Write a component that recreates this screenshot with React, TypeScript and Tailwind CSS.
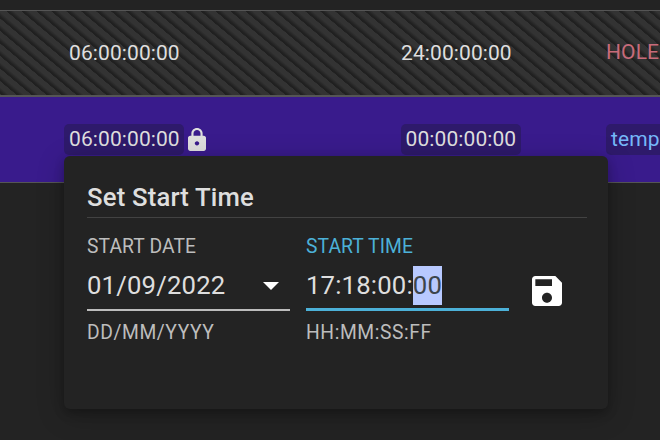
import React from "react";

function TimeChip({ children, className = "" }: { children: React.ReactNode; className?: string }) {
  return (
    <span className={`flex h-[31px] shrink-0 items-center rounded-[5px] bg-[#2e1a6b] ${className}`}>
      {children}
    </span>
  );
}

function LockIcon() {
  return (
    <svg viewBox="4 1 16 21" className="ml-1 h-[23px] w-[18px] fill-[#dedede]" preserveAspectRatio="none">
      <path d="M18 8h-1V6c0-2.76-2.24-5-5-5S7 3.24 7 6v2H6c-1.1 0-2 .9-2 2v10c0 1.1.9 2 2 2h12c1.1 0 2-.9 2-2V10c0-1.1-.9-2-2-2zm-6 9c-1.1 0-2-.9-2-2s.9-2 2-2 2 .9 2 2-.9 2-2 2zm3.1-9H8.9V6c0-1.71 1.39-3.1 3.1-3.1s3.1 1.39 3.1 3.1v2z" />
    </svg>
  );
}

function SaveIcon() {
  return (
    <svg viewBox="3 3 18 18" className="h-[30px] w-[30px] fill-white">
      <path d="M17 3H5c-1.11 0-2 .9-2 2v14c0 1.1.89 2 2 2h14c1.1 0 2-.9 2-2V7l-4-4zm-5 16c-1.66 0-3-1.34-3-3s1.34-3 3-3 3 1.34 3 3-1.34 3-3 3zm3-10H5V5h10v4z" />
    </svg>
  );
}

function SetStartTime() {
  return (
    <section className="absolute top-[156px] left-16 h-[253px] w-[544px] rounded-[6px] bg-[#232323] px-[23px] pt-[22px] shadow-[0_4px_10px_rgba(0,0,0,0.25),0_6px_28px_rgba(0,0,0,0.22)]">
      <h2 className="h-10 w-[500px] border-b border-[#424242] text-[25.7px] leading-[39px] font-medium tracking-[0.17px]">
        Set Start Time
      </h2>
      <div className="flex">
        <div className="w-[203px]">
          <div className="mt-[16px] h-6 text-[19.3px] leading-[26px] tracking-[0.1px] text-[#bdbdbd]">START DATE</div>
          <div className="flex h-[53px] items-center justify-between border-b-2 border-[#bcbcbc] pt-[4px] pr-[11px] text-[25.7px] tracking-[0.17px]">
            <span>01/09/2022</span>
            <svg viewBox="0 0 16 8" className="h-2 w-4 fill-white">
              <path d="M0 0h16L8 8z" />
            </svg>
          </div>
          <div className="mt-[10px] text-[19.3px] leading-6 tracking-[0.58px] text-[#bdbdbd]">DD/MM/YYYY</div>
        </div>
        <div className="ml-4 w-[203px]">
          <div className="mt-[16px] h-6 text-[19.3px] leading-[26px] tracking-[0.1px] text-[#4cb1d8]">START TIME</div>
          <div className="flex h-[53px] items-center border-b-3 border-[#4cb1d8] pt-[5px] text-[25.7px] tracking-[0.17px]">
            <span>17:18:00:</span>
            <span className="h-[39px] bg-[#b8c9ff] leading-[39px] text-[#3c454c]">00</span>
          </div>
          <div className="mt-[10px] text-[19.3px] leading-6 tracking-[0.58px] text-[#bdbdbd]">HH:MM:SS:FF</div>
        </div>
        <div className="mt-[58px] ml-[23px]">
          <SaveIcon />
        </div>
      </div>
    </section>
  );
}

export default function App() {
  return (
    <main className="relative h-[440px] w-[660px] overflow-hidden bg-[#232323] pt-[10px] font-[Roboto,sans-serif] text-[21px] tracking-[0.1px] text-[#dedede]">
      <div className="flex h-[87px] items-center border-t border-b-2 border-[#555555] bg-[repeating-linear-gradient(40deg,#333333_0px,#333333_1px,#202020_1.3px,#202020_2.5px,#333333_6px,#333333_9.6px)] pt-[2px] whitespace-nowrap">
        <span className="ml-[69px] w-[332px]">06:00:00:00</span>
        <span className="w-[205px]">24:00:00:00</span>
        <span className="mb-[2px] text-[#c76b7a]">HOLE</span>
      </div>
      <div className="flex h-[86px] items-center border-b border-[#555555] bg-[#391b8c] pl-16 whitespace-nowrap">
        <div className="flex w-[337px] shrink-0 items-center">
          <TimeChip className="w-[120px] pl-[5px]">06:00:00:00</TimeChip>
          <LockIcon />
        </div>
        <TimeChip className="w-[120px] pl-[4.5px]">00:00:00:00</TimeChip>
        <TimeChip className="ml-[85px] w-[100px] pl-[5px] text-[#75b8f8]">temp</TimeChip>
      </div>
      <SetStartTime />
    </main>
  );
}
